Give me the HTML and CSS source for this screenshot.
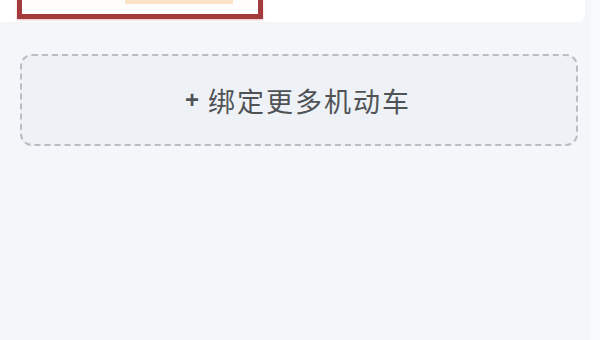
FILE: index.html
```html
<!DOCTYPE html>
<html lang="zh">
<head>
<meta charset="utf-8">
<link rel="stylesheet" href="styles.css">
</head>
<body>
<div class="page">
  <div class="card">
    <div class="highlight">
      <div class="inner">
        <span class="peach"></span>
      </div>
    </div>
  </div>
  <div class="add">
    <span class="plus">+</span><span class="label">绑定更多机动车</span>
  </div>
</div>
</body>
</html>
```
FILE: styles.css
```css
* { box-sizing: border-box; }
html, body { margin: 0; padding: 0; }
body {
  width: 600px;
  height: 340px;
  background: #f4f7fa;
  font-family: "Noto Sans CJK SC", "Noto Sans", sans-serif;
  overflow: hidden;
}
.page {
  display: flex;
  flex-direction: column;
  height: 340px;
  background: linear-gradient(to right, #f4f7fa 0, #f4f7fa 588px, #f9fbfc 594px);
}
.card {
  width: 585px;
  height: 22px;
  background: #ffffff;
  border-radius: 0 0 8px 0;
  padding-left: 17px;
}
.highlight {
  width: 246px;
  height: 19px;
  border: 5px solid #a33b3c;
  border-top: none;
  box-shadow: 0 1px 2px rgba(220, 120, 130, 0.5);
}
.inner {
  height: 100%;
  background: #fffdfb;
  padding-left: 103px;
}
.peach {
  display: block;
  width: 108px;
  height: 4px;
  background: #fbe3c8;
}
.add {
  margin: 32px 0 0 20px;
  width: 558px;
  height: 92px;
  border: 2px dashed #b9bec3;
  border-radius: 12px;
  background: #eef2f6;
  display: flex;
  align-items: center;
  justify-content: center;
  color: #505356;
  font-size: 27px;
  font-weight: 400;
  padding-right: 2px;
}
.plus {
  font-family: "Liberation Sans", sans-serif;
  font-size: 24px;
  font-weight: 700;
  margin-right: 9px;
}
.label {
  letter-spacing: 2px;
}
```
